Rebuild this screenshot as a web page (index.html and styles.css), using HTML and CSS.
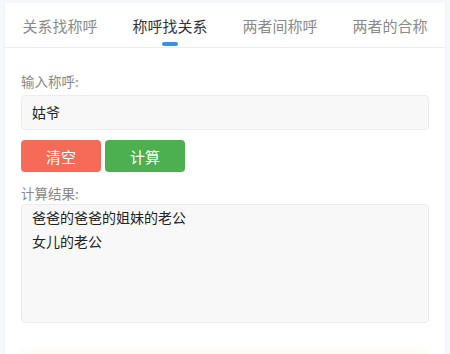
FILE: index.html
```html
<!DOCTYPE html>
<html lang="zh-CN">
<head>
    <meta charset="UTF-8">
    <meta name="viewport" content="width=device-width, initial-scale=1.0">
    <title>亲戚称呼计算器</title>
    <link rel="stylesheet" href="styles.css">
</head>
<body>
    <div class="card">
        <div class="tabs">
            <div class="tab">关系找称呼</div>
            <div class="tab active">称呼找关系</div>
            <div class="tab">两者间称呼</div>
            <div class="tab">两者的合称</div>
        </div>
        <div class="panel">
            <div class="label">输入称呼:</div>
            <div class="input">姑爷</div>
            <div class="buttons">
                <button class="btn btn-clear">清空</button>
                <button class="btn btn-calc">计算</button>
            </div>
            <div class="label label-result">计算结果:</div>
            <div class="result">爸爸的爸爸的姐妹的老公<br>女儿的老公</div>
            <div class="tips"></div>
        </div>
    </div>
</body>
</html>
```

FILE: styles.css
```css
html, body {
    height: 100%;
}

body {
    margin: 0;
    padding: 3px 4px 0;
    box-sizing: border-box;
    background-color: #f6f8fb;
    font-family: "Noto Sans CJK SC", "Noto Sans", sans-serif;
    overflow: hidden;
}

.card {
    background: #fff;
    height: 100%;
    overflow: hidden;
    border-left: 1px solid #f1f2f4;
    border-right: 1px solid #f1f2f4;
    box-sizing: border-box;
}

.tabs {
    display: flex;
    height: 44px;
    border-bottom: 1px solid #ececec;
}

.tab {
    flex: 1;
    position: relative;
    display: flex;
    align-items: center;
    justify-content: center;
    font-size: 15px;
    color: #8a8a8a;
}

.tab.active {
    color: #333;
}

.tab.active::after {
    content: "";
    position: absolute;
    bottom: 1px;
    left: 50%;
    width: 16px;
    height: 4px;
    margin-left: -8px;
    border-radius: 2px;
    background: #3a8ee6;
}

.panel {
    padding: 24px 16px 0;
}

.label {
    font-size: 13.5px;
    line-height: 18px;
    color: #888;
}

.input {
    margin-top: 5px;
    height: 35px;
    box-sizing: border-box;
    padding: 0 10px;
    line-height: 33px;
    font-size: 14px;
    color: #222;
    background: #f8f8f8;
    border: 1px solid #ececec;
    border-radius: 4px;
}

.buttons {
    display: flex;
    gap: 4px;
    margin-top: 10px;
}

.btn {
    width: 80px;
    height: 32px;
    border: none;
    border-radius: 4px;
    color: #fff;
    font-family: inherit;
    font-size: 15px;
    padding: 0;
}

.btn-clear {
    background: #f66b58;
}

.btn-calc {
    background: #4caf50;
}

.label-result {
    margin-top: 12px;
}

.result {
    margin-top: 2px;
    height: 119px;
    box-sizing: border-box;
    padding: 0 10px;
    font-size: 14px;
    line-height: 24px;
    color: #222;
    background: #f8f8f8;
    border: 1px solid #ececec;
    border-radius: 4px;
}

.tips {
    margin-top: 26px;
    height: 20px;
    background: #fffcf3;
}
```
